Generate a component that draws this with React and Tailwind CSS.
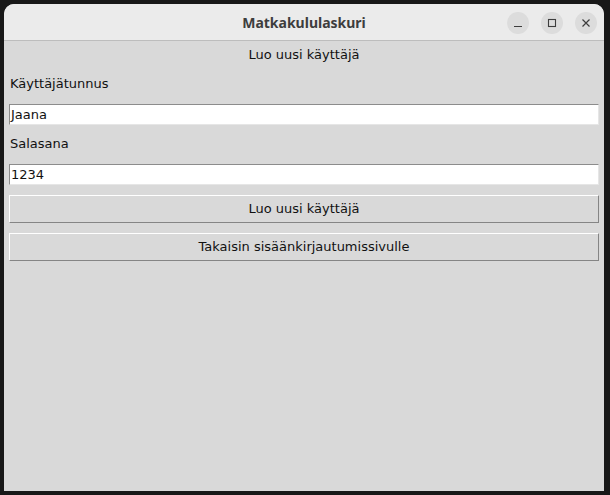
import React from "react";

const fieldFont = { fontFamily: '"DejaVu Sans", sans-serif' };

const Entry = ({ value }) => (
  <div className="mx-[5px] flex h-[21px] items-center border border-t-[#8c8c8c] border-l-[#8c8c8c] border-b-[#e6e6e6] border-r-[#e6e6e6] bg-white pl-[1px] text-[13px] text-[#111]">
    {value}
  </div>
);

const TkButton = ({ children }) => (
  <div className="mx-[5px] flex h-[28px] items-center justify-center border border-t-white border-l-white border-b-[#858585] border-r-[#858585] bg-[#d9d9d9] text-[13px] text-[#111]">
    {children}
  </div>
);

const CircleBtn = ({ children }) => (
  <div className="flex h-[22px] w-[22px] items-center justify-center rounded-full bg-[#dcdcdc] text-[#3d3d3d]">
    {children}
  </div>
);

export default function App() {
  return (
    <div className="h-[495px] w-[610px] bg-[#181818] pl-[4px] pt-[4px]">
      <div className="flex h-[487px] w-[600px] flex-col overflow-hidden rounded-t-[10px] bg-[#d9d9d9]">
        <div className="relative flex h-[37px] shrink-0 items-center justify-center border-b border-[#bdbdbd] bg-[#ebebeb]">
          <span
            className="text-[14px] font-bold text-[#3d3d3d]"
            style={{ fontFamily: '"Noto Sans", sans-serif' }}
          >
            Matkakululaskuri
          </span>
          <div className="absolute right-[7px] top-[8px] flex gap-[12px]">
            <CircleBtn>
              <svg width="10" height="10" viewBox="0 0 10 10">
                <path d="M1 8.5h8" stroke="currentColor" strokeWidth="1.2" />
              </svg>
            </CircleBtn>
            <CircleBtn>
              <svg width="10" height="10" viewBox="0 0 10 10">
                <rect x="1.5" y="1.5" width="7" height="7" fill="none" stroke="currentColor" strokeWidth="1.1" />
              </svg>
            </CircleBtn>
            <CircleBtn>
              <svg width="10" height="10" viewBox="0 0 10 10">
                <path d="M1.5 1.5l7 7M8.5 1.5l-7 7" stroke="currentColor" strokeWidth="1.2" />
              </svg>
            </CircleBtn>
          </div>
        </div>

        <div className="flex flex-col" style={fieldFont}>
          <div className="flex h-[28px] items-center justify-center text-[13px] text-[#111]">
            Luo uusi käyttäjä
          </div>
          <div className="mt-[5px] flex h-[20px] items-center pl-[6px] text-[13px] text-[#111]">
            Käyttäjätunnus
          </div>
          <div className="mt-[10px]">
            <Entry value="Jaana" />
          </div>
          <div className="mt-[9px] flex h-[20px] items-center pl-[6px] text-[13px] text-[#111]">
            Salasana
          </div>
          <div className="mt-[10px]">
            <Entry value="1234" />
          </div>
          <div className="mt-[10px]">
            <TkButton>Luo uusi käyttäjä</TkButton>
          </div>
          <div className="mt-[10px]">
            <TkButton>Takaisin sisäänkirjautumissivulle</TkButton>
          </div>
        </div>
      </div>
    </div>
  );
}
